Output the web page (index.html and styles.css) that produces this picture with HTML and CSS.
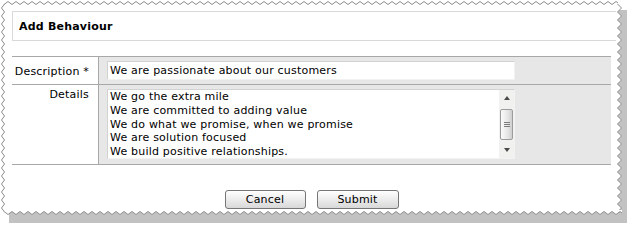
FILE: index.html
```html
<!DOCTYPE html>
<html>
<head>
	<meta charset="utf-8">
	<title>Add Behaviour</title>
	<link rel="stylesheet" href="styles.css">
</head>
<body>
	<div class="sheet">
		<!-- torn paper edge + drop shadow, sits behind the page -->
		<svg class="paper" width="638" height="231" viewBox="0 0 638 231">
			<defs>
				<pattern id="edge-top" x="4" y="0" width="8" height="5" patternUnits="userSpaceOnUse">
					<path d="M0 4.5 L4 1.5 L8 4.5" fill="none" stroke="#8c8c8c"/>
				</pattern>
				<pattern id="edge-left" x="0" y="4" width="5" height="8" patternUnits="userSpaceOnUse">
					<path d="M4.5 0 L1.5 4 L4.5 8" fill="none" stroke="#8c8c8c"/>
				</pattern>
				<pattern id="edge-right" x="616" y="4" width="7" height="8" patternUnits="userSpaceOnUse">
					<path d="M0 0 H1.5 L5.5 4 L1.5 8 H0 Z" fill="#fff"/>
					<path d="M1.5 0 L5.5 4 L1.5 8" fill="none" stroke="#8c8c8c"/>
				</pattern>
				<pattern id="edge-bottom" x="4" y="210" width="8" height="6" patternUnits="userSpaceOnUse">
					<path d="M0 0 H8 V1.5 L4 4.5 L0 1.5 Z" fill="#fff"/>
					<path d="M0 1.5 L4 4.5 L8 1.5" fill="none" stroke="#8c8c8c"/>
				</pattern>
			</defs>
			<rect x="9" y="10" width="618" height="213" fill="#c2c2c2"/>
			<rect x="4" y="4" width="613" height="207" fill="#fff"/>
			<rect x="4" y="0" width="614" height="5" fill="url(#edge-top)"/>
			<rect x="0" y="4" width="5" height="208" fill="url(#edge-left)"/>
			<rect x="616" y="4" width="7" height="208" fill="url(#edge-right)"/>
			<rect x="4" y="210" width="618" height="6" fill="url(#edge-bottom)"/>
		</svg>

		<div class="page">
			<div class="title">Add Behaviour</div>

			<div class="form">
				<div class="row">
					<label class="label label-single" for="desc">Description *</label>
					<div class="field">
						<input id="desc" class="text" type="text" value="We are passionate about our customers">
					</div>
				</div>
				<div class="row">
					<label class="label" for="details">Details</label>
					<div class="field">
						<div class="memo">
							<textarea id="details" class="memo-text">We go the extra mile
We are committed to adding value
We do what we promise, when we promise
We are solution focused
We build positive relationships.</textarea>
							<div class="scrollbar">
								<span class="arrow up"></span>
								<span class="thumb"><i></i><i></i><i></i></span>
								<span class="arrow down"></span>
							</div>
						</div>
					</div>
				</div>
			</div>

			<div class="actions">
				<button class="btn">Cancel</button>
				<button class="btn btn-wide">Submit</button>
			</div>
		</div>
	</div>
</body>
</html>
```

FILE: styles.css
```css
* {
	padding: 0;
	margin: 0;
	box-sizing: border-box;
}
html, body {
	width: 638px;
	height: 231px;
	background: white;
	overflow: hidden;
	font-family: "DejaVu Sans", Verdana, sans-serif;
	font-size: 11px;
	letter-spacing: 0.2px;
	color: #000;
}
.sheet {
	position: relative;
	width: 638px;
	height: 231px;
}
.paper {
	position: absolute;
	top: 0;
	left: 0;
}
.page {
	position: relative;
	padding: 11px 0 0 12px;
}
.title {
	width: 604px;
	height: 30px;
	border: 1px solid #d9d9d9;
	border-right: none;
	padding-left: 6px;
	line-height: 29px;
	font-weight: bold;
}
.form {
	width: 599px;
	margin-top: 15px;
	border-top: 1px solid #a8a8a8;
}
.row {
	display: grid;
	grid-template-columns: 87px 1fr;
	border-bottom: 1px solid #a8a8a8;
}
.label {
	border-right: 1px solid #a8a8a8;
	padding: 3px 9px 0 0;
	text-align: right;
	line-height: 14px;
	background: white;
}
.label.label-single {
	padding-top: 8px;
}
.field {
	background: #e7e7e7;
	padding: 4px 0 4px 8px;
}
.text {
	display: block;
	width: 408px;
	height: 19px;
	border: 1px solid;
	border-color: #d2d2d2 #f2f2f2 #f2f2f2 #d2d2d2;
	padding: 0 2px;
	font: inherit;
	letter-spacing: inherit;
	color: #000;
	background: white;
	outline: none;
}
.memo {
	display: flex;
	width: 408px;
	height: 70px;
	margin-bottom: 1px;
	border: 1px solid;
	border-color: #d2d2d2 #f2f2f2 #f2f2f2 #d2d2d2;
	background: white;
}
.memo-text {
	flex: 1;
	border: none;
	padding: 0 2px;
	font: inherit;
	letter-spacing: inherit;
	line-height: 13.8px;
	color: #000;
	resize: none;
	overflow: hidden;
	outline: none;
	white-space: pre;
}
.scrollbar {
	width: 15px;
	display: flex;
	flex-direction: column;
	align-items: center;
	background: #f1f1ef;
}
.arrow {
	height: 16px;
	width: 15px;
	display: flex;
	align-items: center;
	justify-content: center;
}
.arrow::after {
	content: "";
	border-left: 3.5px solid transparent;
	border-right: 3.5px solid transparent;
}
.arrow.up::after {
	border-bottom: 4px solid #4a4a4a;
}
.arrow.down::after {
	border-top: 4px solid #4a4a4a;
}
.thumb {
	width: 13px;
	height: 31px;
	margin: 3px 0 2px;
	border: 1px solid #9c9c9c;
	border-radius: 2px;
	background: linear-gradient(to right, #fbfbfb, #e6e6e6 60%, #cfcfcf);
	display: flex;
	flex-direction: column;
	align-items: center;
	justify-content: center;
	gap: 1px;
}
.thumb i {
	display: block;
	width: 6px;
	height: 1px;
	background: #7c7c7c;
}
.actions {
	width: 599px;
	margin-top: 25px;
	display: flex;
	justify-content: center;
	gap: 11px;
}
.btn {
	width: 81px;
	height: 19px;
	border: 1px solid #767676;
	border-radius: 3px;
	background: linear-gradient(#ffffff, #eeeeee 45%, #d8d8d8);
	font: inherit;
	letter-spacing: inherit;
	color: #000;
	padding: 0;
	line-height: 16px;
}
.btn.btn-wide {
	width: 82px;
}
```
